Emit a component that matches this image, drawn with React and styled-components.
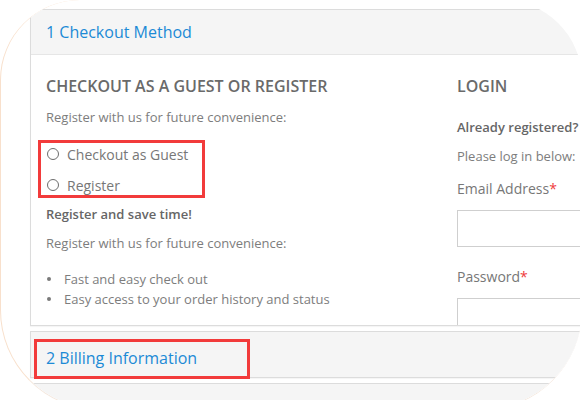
import { styled, createGlobalStyle } from "styled-components"

const GlobalStyle = createGlobalStyle`
  html, body {
    margin: 0;
    padding: 0;
    background: #fff;
    overflow: hidden;
  }
  body {
    font-family: "Open Sans", "Liberation Sans", sans-serif;
  }
`

const Frame = styled.div`
  width: 582px;
  height: 410px;
  box-sizing: border-box;
  border-radius: 80px 80px 100px 100px;
  border-left: 1px solid #f8e0cc;
  border-bottom: 1px solid #f5e8de;
  overflow: hidden;
  background: #fff;
  padding: 9px 0 0 29px;
`

const Panel = styled.div`
  width: 640px;
  display: flex;
  flex-direction: column;
  gap: 5px;
`

const Section = styled.section`
  border: 1px solid #dcdcdc;
  background: #fff;
  box-shadow: 0 1px 1px rgba(0, 0, 0, 0.04);
`

const Header = styled.div`
  height: 45px;
  box-sizing: border-box;
  background: #f5f5f5;
  display: flex;
  align-items: ${(p) => (p.$boxed ? "flex-start" : "center")};
  padding: ${(p) => (p.$boxed ? "7px 0 0 3px" : "0 0 1px 15px")};
  border-bottom: ${(p) => (p.$last ? "none" : "1px solid #e6e6e6")};
`

const Title = styled.h2`
  margin: 0;
  font-size: 16px;
  font-weight: 400;
  color: #1c8ad6;
  line-height: 22px;
`

const Highlight = styled.div`
  height: 40px;
  width: 216px;
  box-sizing: border-box;
  border: 3px solid #f23b3b;
  display: flex;
  align-items: center;
  padding: 0 0 2px 9px;
`

const Body = styled.div`
  height: 270px;
  overflow: hidden;
  display: grid;
  grid-template-columns: 411px 1fr;
  padding: 21px 0 0 15px;
  box-sizing: border-box;
`

const Column = styled.div`
  display: flex;
  flex-direction: column;
  align-items: flex-start;
`

const Heading = styled.h3`
  margin: 0;
  font-size: 16px;
  line-height: 20px;
  font-weight: 600;
  color: #6a6a6a;
  white-space: nowrap;
`

const Text = styled.p`
  margin: ${(p) => p.$mt || 0}px 0 0;
  font-size: 13px;
  line-height: 18px;
  color: #7d7d7d;
  font-weight: ${(p) => (p.$bold ? 600 : 400)};
  ${(p) => p.$bold && "color: #666;"}
  white-space: nowrap;
`

const RadioBox = styled.div`
  margin: 14px 0 0 -8px;
  width: 167px;
  box-sizing: border-box;
  border: 3px solid #f23b3b;
  padding: 1px 0 0 6px;
  display: flex;
  flex-direction: column;
  gap: 11px;
`

const RadioRow = styled.label`
  display: flex;
  align-items: center;
  gap: 8px;
  height: 20px;
  font-size: 14px;
  color: #777;
  white-space: nowrap;
`

const RadioCircle = styled.span`
  width: 12px;
  height: 12px;
  box-sizing: border-box;
  border: 1px solid #6d6d6d;
  border-radius: 50%;
  background: #fff;
  flex: none;
`

const List = styled.ul`
  margin: 17px 0 0;
  padding: 0;
  list-style: none;
`

const Item = styled.li`
  display: flex;
  align-items: center;
  gap: 13px;
  padding-left: 1px;
  font-size: 13px;
  line-height: 20px;
  color: #7d7d7d;
  white-space: nowrap;

  &::before {
    content: "";
    width: 4px;
    height: 4px;
    border-radius: 50%;
    background: #7a7a7a;
  }
`

const Label = styled.label`
  margin-top: ${(p) => p.$mt}px;
  font-size: 14px;
  line-height: 20px;
  color: #777;
  white-space: nowrap;

  span {
    color: #ef3b3b;
  }
`

const Input = styled.input`
  margin-top: 11px;
  width: 200px;
  height: 37px;
  box-sizing: border-box;
  border: 1px solid #cfcfcf;
  background: #fff;
  flex: none;
`

export default function App() {
  return (
    <>
      <GlobalStyle />
      <Frame>
        <Panel>
          <Section>
            <Header>
              <Title>1 Checkout Method</Title>
            </Header>
            <Body>
              <Column>
                <Heading>CHECKOUT AS A GUEST OR REGISTER</Heading>
                <Text $mt={12}>Register with us for future convenience:</Text>
                <RadioBox>
                  <RadioRow>
                    <RadioCircle />
                    Checkout as Guest
                  </RadioRow>
                  <RadioRow>
                    <RadioCircle />
                    Register
                  </RadioRow>
                </RadioBox>
                <Text $bold $mt={7}>Register and save time!</Text>
                <Text $mt={11}>Register with us for future convenience:</Text>
                <List>
                  <Item>Fast and easy check out</Item>
                  <Item>Easy access to your order history and status</Item>
                </List>
              </Column>
              <Column>
                <Heading>LOGIN</Heading>
                <Text $bold $mt={22}>Already registered?</Text>
                <Text $mt={11}>Please log in below:</Text>
                <Label $mt={14}>
                  Email Address<span>*</span>
                </Label>
                <Input type="text" />
                <Label $mt={20}>
                  Password<span>*</span>
                </Label>
                <Input type="password" />
              </Column>
            </Body>
          </Section>
          <Section>
            <Header $boxed $last>
              <Highlight>
                <Title>2 Billing Information</Title>
              </Highlight>
            </Header>
          </Section>
          <Section>
            <Header $last />
          </Section>
        </Panel>
      </Frame>
    </>
  )
}
